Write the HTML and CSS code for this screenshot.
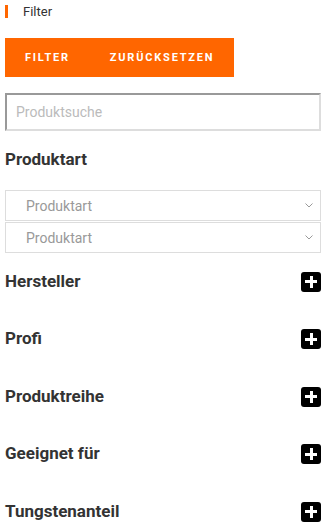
FILE: index.html
```html
<!DOCTYPE html>
<html lang="de">
<head>
    <meta charset="UTF-8">
    <meta name="viewport" content="width=device-width, initial-scale=1.0">
    <title>Filter</title>
    <link rel="stylesheet" href="styles.css">
</head>
<body>
    <aside class="sidebar">
        <div class="sidebar-title">Filter</div>

        <div class="actions">
            <button class="action-button">Filter</button>
            <button class="action-button">Zurücksetzen</button>
        </div>

        <input class="search" type="text" placeholder="Produktsuche">

        <h3 class="group-title first">Produktart</h3>
        <div class="selects">
            <div class="select">
                <span>Produktart</span>
                <svg width="8" height="5" viewBox="0 0 8 5"><path d="M0.5 0.5 L4 4 L7.5 0.5" fill="none" stroke="#999" stroke-width="1"/></svg>
            </div>
            <div class="select">
                <span>Produktart</span>
                <svg width="8" height="5" viewBox="0 0 8 5"><path d="M0.5 0.5 L4 4 L7.5 0.5" fill="none" stroke="#999" stroke-width="1"/></svg>
            </div>
        </div>

        <!-- aufklappbare Filtergruppen -->
        <div class="group">
            <h3 class="group-title">Hersteller</h3>
            <span class="toggle"></span>
        </div>
        <div class="group">
            <h3 class="group-title">Profi</h3>
            <span class="toggle"></span>
        </div>
        <div class="group">
            <h3 class="group-title">Produktreihe</h3>
            <span class="toggle"></span>
        </div>
        <div class="group">
            <h3 class="group-title">Geeignet für</h3>
            <span class="toggle"></span>
        </div>
        <div class="group">
            <h3 class="group-title">Tungstenanteil</h3>
            <span class="toggle"></span>
        </div>
    </aside>
</body>
</html>
```

FILE: styles.css
```css
* {
    margin: 0;
    padding: 0;
    box-sizing: border-box;
}

body, html {
    font-family: Roboto, Arial, sans-serif;
    background: #fff;
    color: #333;
    overflow: hidden;
}

.sidebar {
    padding: 5px 6px 0 5px;
}

.sidebar-title {
    border-left: 3px solid #ff6600;
    padding-left: 15px;
    font-size: 13px;
    line-height: 13px;
    color: #333;
}

.actions {
    display: flex;
    width: 229px;
    height: 39px;
    margin-top: 20px;
    background: #ff6600;
}

.action-button {
    background: none;
    border: none;
    color: #fff;
    font-family: Roboto, Arial, sans-serif;
    font-size: 11px;
    font-weight: bold;
    letter-spacing: 1.8px;
    text-transform: uppercase;
    padding: 0 20px;
    cursor: pointer;
}

.search {
    display: block;
    width: 100%;
    height: 38px;
    margin-top: 16px;
    border: 2px solid #ddd;
    border-top-color: #999;
    border-left-color: #999;
    padding: 0 9px;
    font-family: Roboto, Arial, sans-serif;
    font-size: 14px;
    color: #333;
    outline: none;
}

.search::placeholder {
    color: #bbb;
}

.group-title {
    font-size: 17px;
    line-height: 18px;
    font-weight: bold;
    color: #333;
}

.group-title.first {
    margin-top: 18px;
    line-height: 20px;
}

.selects {
    margin-top: 21px;
}

.select {
    display: flex;
    align-items: center;
    justify-content: space-between;
    height: 31px;
    border: 1px solid #ddd;
    padding: 0 7px 0 20px;
    font-size: 14px;
    color: #999;
}

.select + .select {
    margin-top: 1px;
}

.group {
    display: flex;
    align-items: center;
    justify-content: space-between;
    height: 57.5px;
}

.group .group-title {
    margin-top: -2px;
}

.toggle {
    position: relative;
    width: 20px;
    height: 20px;
    border-radius: 3px;
    background: #000;
}

.toggle::before,
.toggle::after {
    content: "";
    position: absolute;
    background: #fff;
}

.toggle::before {
    left: 4px;
    top: 8.5px;
    width: 12px;
    height: 3px;
}

.toggle::after {
    left: 8.5px;
    top: 4px;
    width: 3px;
    height: 12px;
}
```
